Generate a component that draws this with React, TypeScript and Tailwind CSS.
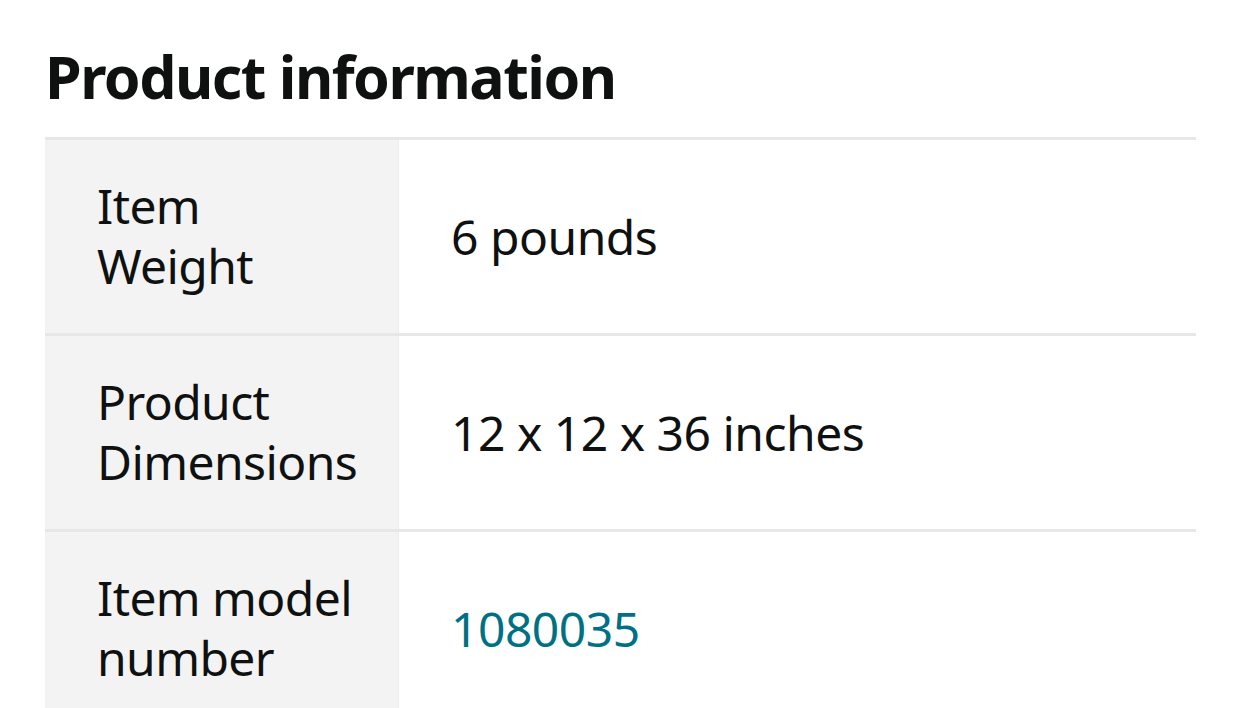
const rows: { label: string[]; value: string; link?: boolean }[] = [
  { label: ['Item', 'Weight'], value: '6 pounds' },
  { label: ['Product', 'Dimensions'], value: '12 x 12 x 36 inches' },
  { label: ['Item model', 'number'], value: '1080035', link: true },
];

export default function App() {
  return (
    <div className="h-[708px] w-[1242px] overflow-hidden bg-white pl-[45px] pr-[46px] font-['Noto_Sans',sans-serif] text-[#0f1111]">
      <h1 className="pt-[36px] pb-[21px] text-[59px] leading-[80px] font-bold tracking-[-1.5px]">Product information</h1>
      <div className="flex flex-col">
        {rows.map(r => (
          <div key={r.value} className="grid grid-cols-[354px_1fr] border-t-[3px] border-[#e7e7e7]">
            <div className="bg-[#f3f3f3] border-r border-[#ececec] pl-[52px] pr-[20px] pt-[36px] pb-[37px] text-[48px] leading-[60px] tracking-[-0.6px] whitespace-nowrap">
              {r.label.map(l => (
                <div key={l}>{l}</div>
              ))}
            </div>
            <div className={`flex items-center px-[52px] text-[48px] leading-[60px] tracking-[-0.5px] ${r.link ? 'text-[#007185]' : ''}`}>
              {r.value}
            </div>
          </div>
        ))}
      </div>
    </div>
  );
}
